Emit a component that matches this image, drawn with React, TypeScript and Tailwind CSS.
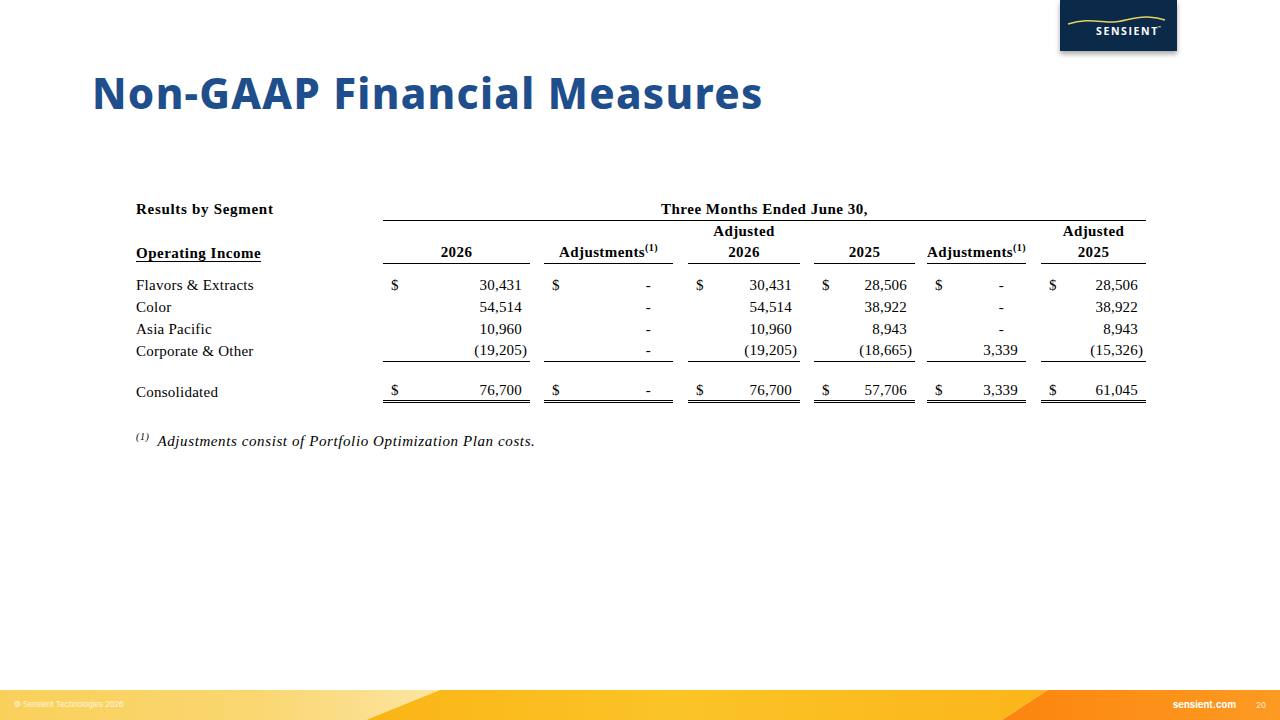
const serif = "font-['Liberation_Serif','Times_New_Roman',serif]"

const cols = [
  'w-[147px]',
  'ml-[14px] w-[129px]',
  'ml-[15px] w-[112px]',
  'ml-[14px] w-[101px]',
  'ml-[12px] w-[99px]',
  'ml-[15px] w-[105px]',
]

const heads: { top?: string; main: string; sup?: boolean }[] = [
  { main: '2026' },
  { main: 'Adjustments', sup: true },
  { top: 'Adjusted', main: '2026' },
  { main: '2025' },
  { main: 'Adjustments', sup: true },
  { top: 'Adjusted', main: '2025' },
]

const rows = [
  { label: 'Flavors & Extracts', vals: ['30,431', '-', '30,431', '28,506', '-', '28,506'], dollar: true },
  { label: 'Color', vals: ['54,514', '-', '54,514', '38,922', '-', '38,922'] },
  { label: 'Asia Pacific', vals: ['10,960', '-', '10,960', '8,943', '-', '8,943'] },
  { label: 'Corporate & Other', vals: ['(19,205)', '-', '(19,205)', '(18,665)', '3,339', '(15,326)'], line: 'single' },
]

const total = { label: 'Consolidated', vals: ['76,700', '-', '76,700', '57,706', '3,339', '61,045'], dollar: true, line: 'double' }

const Sup = () => <span className="relative -top-[6px] text-[10px] leading-none">(1)</span>

const Value = ({ v }: { v: string }) => {
  if (v === '-') return <span className="mr-[22px]">-</span>
  const paren = v.startsWith('(')
  return (
    <span className="flex">
      {paren ? v.slice(0, -1) : v}
      <span className="w-[8px]">{paren ? ')' : ''}</span>
    </span>
  )
}

const Row = ({ row }: { row: { label: string; vals: string[]; dollar?: boolean; line?: string } }) => (
  <div className="flex h-[22px] items-stretch">
    <div className="flex w-[247px] items-center tracking-[0.25px]">{row.label}</div>
    {row.vals.map((v, i) => (
      <div
        key={i}
        className={`${cols[i]} flex items-center justify-between pl-[8px] tracking-[0.2px] ${
          row.line === 'single' ? 'border-b border-black' : row.line === 'double' ? 'border-b-[3px] border-double border-black' : ''
        }`}
      >
        <span>{row.dollar ? '$' : ''}</span>
        <Value v={v} />
      </div>
    ))}
  </div>
)

const Logo = () => (
  <div className="mr-[103px] ml-auto flex h-[51px] w-[117px] flex-col items-center justify-center bg-[#0b2a4a] shadow-[0_3px_5px_rgba(0,0,0,0.35)]">
    <svg width="100" height="12" viewBox="0 0 100 12" className="-mb-[1px] -ml-[6px]">
      <path d="M2 9 C 18 4, 28 6, 42 7 C 58 8, 66 1, 82 2 C 90 2.5, 96 4, 99 5" fill="none" stroke="#e3d25c" strokeWidth="1.6" />
    </svg>
    <div className="ml-[20px] flex items-start font-['Open_Sans',sans-serif] text-[10.5px] font-bold leading-none tracking-[1.6px] text-white">
      SENSIENT<span className="-ml-[1px] text-[4px] tracking-normal">™</span>
    </div>
  </div>
)

const Footer = () => (
  <div className="relative mt-auto h-[30px] w-full font-['Inter',sans-serif]">
    <svg className="absolute inset-0" width="1280" height="30" viewBox="0 0 1280 30" preserveAspectRatio="none">
      <defs>
        <linearGradient id="fl" x1="0" x2="1" y1="0" y2="0">
          <stop offset="0" stopColor="#f9d05a" />
          <stop offset="0.6" stopColor="#fad772" />
          <stop offset="1" stopColor="#fce5a2" />
        </linearGradient>
        <linearGradient id="fm" x1="0" x2="1" y1="0" y2="0">
          <stop offset="0" stopColor="#fbb416" />
          <stop offset="0.45" stopColor="#fbc427" />
          <stop offset="1" stopColor="#fbb519" />
        </linearGradient>
        <linearGradient id="fr" x1="0" x2="1" y1="0" y2="0">
          <stop offset="0" stopColor="#fc850e" />
          <stop offset="1" stopColor="#fc9a22" />
        </linearGradient>
      </defs>
      <polygon points="0,0 440,0 366,30 0,30" fill="url(#fl)" />
      <polygon points="440,0 1048,0 1002,30 366,30" fill="url(#fm)" />
      <polygon points="1048,0 1280,0 1280,30 1002,30" fill="url(#fr)" />
    </svg>
    <div className="relative flex h-full items-center pl-[14px] pr-[14px]">
      <span className="text-[7.5px] text-white/80">© Sensient Technologies 2026</span>
      <span className="ml-auto text-[9.5px] font-bold text-white">sensient.com</span>
      <span className="ml-[20px] text-[8px] text-white/80">20</span>
    </div>
  </div>
)

export default function App() {
  return (
    <div className="flex h-[720px] w-[1280px] flex-col overflow-hidden bg-white">
      <div className="flex items-start">
        <h1 className="pt-[67px] pl-[92px] font-['Noto_Sans',sans-serif] text-[42px] leading-[52px] font-extrabold tracking-[1.3px] text-[#1f4e8d]">
          Non-GAAP Financial Measures
        </h1>
        <Logo />
      </div>

      <div className={`mt-[80px] ml-[136px] ${serif} text-[15px] text-black`}>
        <div className="flex h-[21px] items-center font-bold">
          <div className="w-[247px] tracking-[0.7px]">Results by Segment</div>
          <div className="w-[763px] border-b border-black text-center tracking-[0.5px]">Three Months Ended June 30,</div>
        </div>
        <div className="flex h-[44px] items-stretch font-bold leading-[21px]">
          <div className="flex w-[247px] items-end">
            <span className="underline underline-offset-[3px] tracking-[0.5px]">Operating Income</span>
          </div>
          {heads.map((h, i) => (
            <div key={i} className={`${cols[i]} flex flex-col items-center justify-end border-b border-black tracking-[0.4px]`}>
              {h.top && <span>{h.top}</span>}
              <span>
                {h.main}
                {h.sup && <Sup />}
              </span>
            </div>
          ))}
        </div>
        <div className="h-[10px]" />
        {rows.map((r) => (
          <Row key={r.label} row={r} />
        ))}
        <div className="h-[19px]" />
        <Row row={total} />
        <div className="mt-[27px] flex items-center italic tracking-[0.6px]">
          <span className="relative -top-[5px] text-[10px]">(1)</span>
          <span className="ml-[8px]">Adjustments consist of Portfolio Optimization Plan costs.</span>
        </div>
      </div>

      <Footer />
    </div>
  )
}
